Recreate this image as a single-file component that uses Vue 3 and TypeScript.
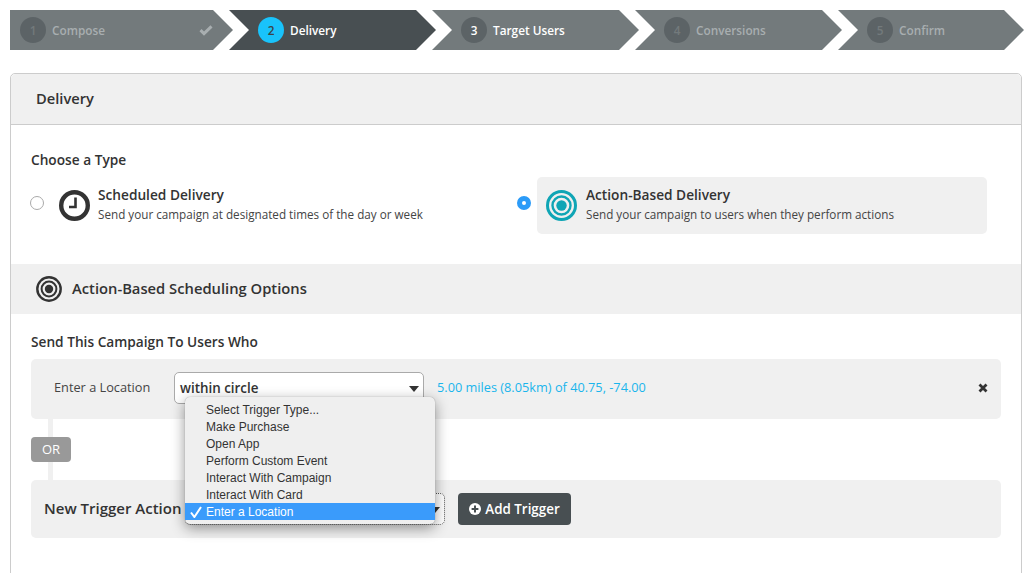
<script setup lang="ts">
interface Step {
  num: number
  label: string
  state: 'done' | 'active' | 'next' | 'locked'
}

const steps: Step[] = [
  { num: 1, label: 'Compose', state: 'done' },
  { num: 2, label: 'Delivery', state: 'active' },
  { num: 3, label: 'Target Users', state: 'next' },
  { num: 4, label: 'Conversions', state: 'locked' },
  { num: 5, label: 'Confirm', state: 'locked' }
]

const triggerTypes: string[] = [
  'Select Trigger Type...',
  'Make Purchase',
  'Open App',
  'Perform Custom Event',
  'Interact With Campaign',
  'Interact With Card',
  'Enter a Location'
]
const selectedType = 'Enter a Location'
</script>

<template>
  <div class="page">
    <!-- wizard steps -->
    <nav class="steps">
      <div v-for="s in steps" :key="s.num" class="step" :class="s.state">
        <span class="num">{{ s.num }}</span>
        <span class="label">{{ s.label }}</span>
        <svg v-if="s.state === 'done'" class="done-check" viewBox="0 0 14 12" width="14" height="12">
          <path d="M1.5 6.2 L5 9.6 L12.5 2.4" fill="none" stroke="currentColor" stroke-width="3" />
        </svg>
      </div>
    </nav>

    <section class="card">
      <header class="card-head">Delivery</header>

      <div class="type-block">
        <h4 class="small-title">Choose a Type</h4>
        <div class="types">
          <div class="type">
            <span class="radio"></span>
            <div class="type-box">
              <svg class="type-icon" viewBox="0 0 31 31" width="31" height="31">
                <circle cx="15.5" cy="15.5" r="13.3" fill="none" stroke="#333" stroke-width="4.4" />
                <path d="M16.5 7.5 V17 H10" fill="none" stroke="#333" stroke-width="2.6" />
              </svg>
              <div>
                <div class="type-title">Scheduled Delivery</div>
                <div class="type-sub">Send your campaign at designated times of the day or week</div>
              </div>
            </div>
          </div>
          <div class="type picked">
            <span class="radio on"></span>
            <div class="type-box">
              <svg class="type-icon" viewBox="0 0 31 31" width="31" height="31">
                <circle cx="15.5" cy="15.5" r="14" fill="none" stroke="#0fa5b5" stroke-width="3" />
                <circle cx="15.5" cy="15.5" r="9" fill="none" stroke="#0fa5b5" stroke-width="2.4" />
                <circle cx="15.5" cy="15.5" r="5.2" fill="#0fa5b5" />
              </svg>
              <div>
                <div class="type-title">Action-Based Delivery</div>
                <div class="type-sub">Send your campaign to users when they perform actions</div>
              </div>
            </div>
          </div>
        </div>
      </div>

      <div class="band">
        <svg viewBox="0 0 26 26" width="26" height="26">
          <circle cx="13" cy="13" r="11.7" fill="none" stroke="#333" stroke-width="2.4" />
          <circle cx="13" cy="13" r="7.4" fill="none" stroke="#333" stroke-width="2" />
          <circle cx="13" cy="13" r="4.2" fill="#333" />
        </svg>
        <span class="band-title">Action-Based Scheduling Options</span>
      </div>

      <div class="rules">
        <h4 class="small-title">Send This Campaign To Users Who</h4>

        <div class="rule">
          <span class="rule-name">Enter a Location</span>
          <div class="select">
            <span>within circle</span>
            <i class="caret"></i>
          </div>
          <a class="rule-link">5.00 miles (8.05km) of 40.75, -74.00</a>
          <svg class="remove" viewBox="0 0 10 10" width="10" height="10">
            <path d="M1.5 1.5 L8.5 8.5 M8.5 1.5 L1.5 8.5" stroke="#333" stroke-width="2.8" />
          </svg>
        </div>

        <div class="joiner">
          <span class="or">OR</span>
        </div>

        <div class="rule new">
          <span class="new-name">New Trigger Action</span>
          <div class="select-wrap">
            <div class="select dotted"><i class="caret"></i></div>
            <!-- native popup of the select, open over the rows -->
            <ul class="menu">
              <li v-for="t in triggerTypes" :key="t" :class="{ sel: t === selectedType }">
                <svg v-if="t === selectedType" class="menu-check" viewBox="0 0 12 12" width="12" height="12">
                  <path d="M1 6.5 L4.4 11 L11 1" fill="none" stroke="#fff" stroke-width="2" />
                </svg>
                {{ t }}
              </li>
            </ul>
          </div>
          <button class="add" type="button">
            <svg viewBox="0 0 12 12" width="12" height="12">
              <circle cx="6" cy="6" r="6" fill="#fff" />
              <path d="M6 2.6 V9.4 M2.6 6 H9.4" stroke="#484f52" stroke-width="2" />
            </svg>
            Add Trigger
          </button>
        </div>
      </div>
    </section>
  </div>
</template>

<style scoped>
.page {
  padding: 10px 5px 0 10px;
  font-family: "Open Sans", Lato, sans-serif;
  color: #333;
}

/* wizard */
.steps {
  display: flex;
  height: 40px;
}
.step {
  display: flex;
  flex: none;
  align-items: center;
  width: 207px;
  margin-left: -4px;
  padding-left: 29px;
  box-sizing: border-box;
  background: #737a7c;
  color: #a8aeb0;
  font-size: 11.8px;
  font-weight: 600;
  clip-path: polygon(0 0, calc(100% - 20px) 0, 100% 50%, calc(100% - 20px) 100%, 0 100%, 20px 50%);
}
.step:first-child {
  width: 223px;
  margin-left: 0;
  padding-left: 10px;
  clip-path: polygon(0 0, calc(100% - 20px) 0, 100% 50%, calc(100% - 20px) 100%, 0 100%);
}
.step:last-child {
  width: 186px;
}
.step .num {
  width: 26px;
  height: 26px;
  margin-right: 6px;
  border-radius: 50%;
  background: #5c6366;
  color: #737a7c;
  text-align: center;
  line-height: 26px;
  flex: none;
}
.step .label {
  margin-top: -1px;
}
.step.active {
  background: #484f52;
  color: #fff;
}
.step.active .num {
  background: #19c3fb;
  color: #3c4448;
}
.step.next {
  color: #fff;
}
.step.next .num {
  color: #fff;
}
.done-check {
  margin-left: auto;
  margin-right: 20px;
  color: #a8aeb0;
}

/* card */
.card {
  margin-top: 23px;
  min-height: 560px;
  border: 1px solid #ccc;
  border-radius: 5px 5px 0 0;
}
.card-head {
  height: 50px;
  padding-left: 25px;
  background: #f0f0f0;
  border-bottom: 1px solid #ccc;
  border-radius: 5px 5px 0 0;
  font-size: 14.7px;
  font-weight: 600;
  line-height: 49px;
  color: #333;
}
.small-title {
  margin: 0;
  font-size: 13.7px;
  font-weight: 600;
  line-height: 18px;
  color: #333;
}

.type-block {
  height: 139px;
  padding: 26px 20px 0;
  box-sizing: border-box;
}
.types {
  display: flex;
  margin-top: 8px;
}
.type {
  display: flex;
  align-items: center;
  width: 486px;
}
.type.picked {
  width: 470px;
}
.radio {
  width: 14px;
  height: 14px;
  margin-top: -5px;
  margin-left: -1px;
  border: 1px solid #aaa;
  border-radius: 50%;
  box-sizing: border-box;
  background: #fff;
  flex: none;
}
.radio.on {
  margin-left: 0;
  border: 5px solid #2b9bf8;
}
.type-box {
  display: flex;
  align-items: center;
  flex: 1;
  height: 57px;
  margin-left: 15px;
  border-radius: 5px;
}
.picked .type-box {
  margin-left: 6px;
  padding-left: 9px;
  background: #f0f0f0;
}
.type-icon {
  flex: none;
  margin-right: 8px;
}
.picked .type-icon {
  margin-right: 9px;
}
.type-title {
  margin-top: -3px;
  font-size: 13.7px;
  font-weight: 600;
  line-height: 18px;
  color: #333;
}
.type-sub {
  margin-top: 2px;
  font-size: 11.7px;
  line-height: 16px;
  color: #444;
}

.band {
  display: flex;
  align-items: center;
  gap: 10px;
  height: 50px;
  padding-left: 25px;
  background: #f0f0f0;
  font-size: 14.75px;
  font-weight: 600;
}
.band-title {
  margin-top: -2px;
}

.rules {
  padding: 19px 20px 0;
}
.rule {
  display: flex;
  align-items: center;
  height: 60px;
  margin-top: 8px;
  padding-bottom: 3px;
  box-sizing: border-box;
  background: #f0f0f0;
  border-radius: 5px;
}
.rule-name {
  width: 143px;
  margin-top: -2px;
  padding-left: 23px;
  box-sizing: border-box;
  font-size: 12.75px;
  color: #444;
}
.select {
  position: relative;
  width: 250px;
  height: 32px;
  padding-left: 5px;
  box-sizing: border-box;
  background: #fff;
  border: 1px solid #aaa;
  border-radius: 5px;
  font-size: 13.4px;
  font-weight: 600;
  line-height: 30px;
  color: #333;
}
.caret {
  position: absolute;
  right: 4px;
  top: 13px;
  border-left: 5.5px solid transparent;
  border-right: 5.5px solid transparent;
  border-top: 6px solid #333;
}
.rule-link {
  margin-top: -2px;
  margin-left: 13px;
  font-size: 12.75px;
  color: #1ab5ec;
}
.remove {
  margin-left: auto;
  margin-right: 13px;
}

.joiner {
  height: 61px;
  margin-left: 17px;
  border-left: 5px solid #f0f0f0;
  display: flex;
  align-items: center;
}
.or {
  width: 40px;
  height: 25px;
  margin-left: -22px;
  background: #999;
  border-radius: 4px;
  color: #fff;
  font-size: 13px;
  font-weight: 500;
  line-height: 24px;
  text-align: center;
}

.rule.new {
  height: 58px;
  margin-top: 0;
  padding: 0 0 0 13px;
}
.new-name {
  width: 141px;
  flex: none;
  margin-top: -2px;
  font-size: 15px;
  font-weight: 600;
  color: #333;
}
.select-wrap {
  position: relative;
}
.select.dotted {
  width: 260px;
  border: 1px dotted #555;
}
.menu {
  position: absolute;
  left: 0;
  bottom: 1px;
  width: 250px;
  margin: 0;
  padding: 4px 0;
  list-style: none;
  background: #efefef;
  border-radius: 5px;
  box-shadow: 0 4px 14px rgba(0, 0, 0, 0.42), 0 0 1px rgba(0, 0, 0, 0.4);
  font-family: "Liberation Sans", Arial, sans-serif;
  font-size: 12px;
  color: #333;
}
.menu li {
  position: relative;
  height: 17px;
  padding-left: 21px;
  line-height: 19px;
}
.menu li.sel {
  background: #3a9bfb;
  color: #fff;
}
.menu-check {
  position: absolute;
  left: 5px;
  top: 3px;
}
.add {
  display: flex;
  align-items: center;
  justify-content: center;
  gap: 4px;
  width: 113px;
  height: 32px;
  margin-left: 13px;
  padding: 0;
  background: #484f52;
  border: 0;
  border-radius: 4px;
  color: #fff;
  font-family: inherit;
  font-size: 13.4px;
  font-weight: 600;
}
</style>

<style>
html,
body {
  margin: 0;
  height: 100%;
  overflow: hidden;
  background: #fff;
}
</style>
